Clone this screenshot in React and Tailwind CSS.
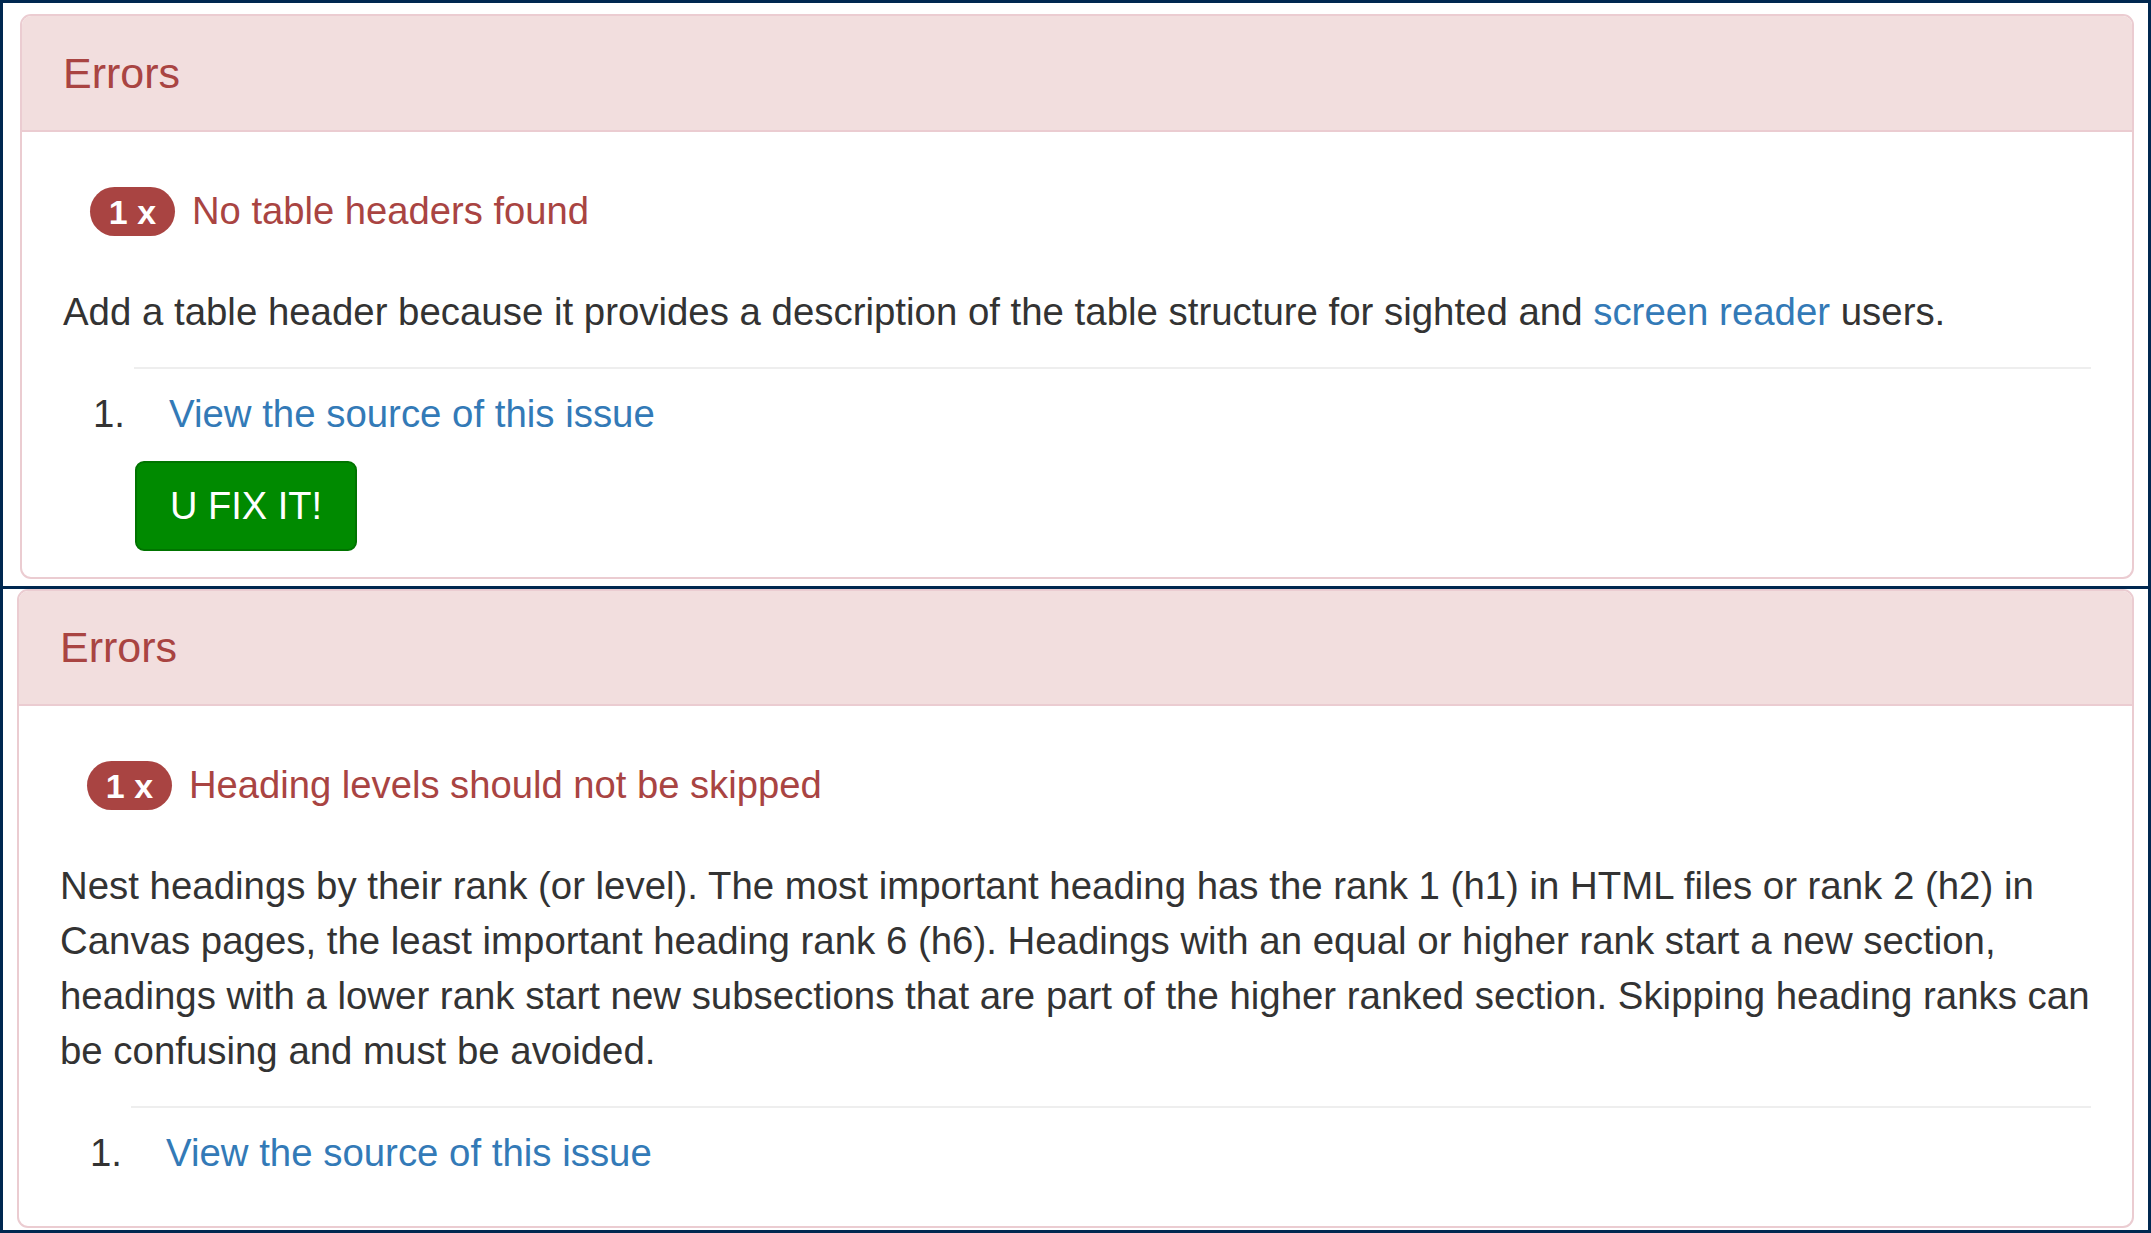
import React from 'react';

const font = { fontFamily: '"Liberation Sans", Arial, sans-serif' };

const Panel = ({ title, description, showButton, headerClass, bodyClass }) => {
  return (
    <div className="bg-white border-2 border-[#ebccd1] rounded-[11px] overflow-hidden">
      <div className={`flex items-center px-[41px] bg-[#f2dede] border-b-2 border-[#ebccd1] ${headerClass}`}>
        <h3 className="text-[43px] leading-none text-[#a94442] font-normal">Errors</h3>
      </div>
      <div className={`px-[41px] pt-[55px] ${bodyClass}`}>
        {/* Issue title */}
        <div className="flex items-center pl-[27px] h-[49px]">
          <span className="flex items-center justify-center w-[85px] h-[49px] rounded-full bg-[#a94442] text-white text-[34px] font-bold leading-none">
            1 x
          </span>
          <span className="ml-[17px] text-[38.2px] leading-none text-[#a94442] whitespace-nowrap">{title}</span>
        </div>

        <p className="mt-[48px] text-[38.4px] leading-[55px] text-[#333333]">{description}</p>

        <hr className="mt-[28px] ml-[71px] border-0 border-t-2 border-[#eeeeee]" />

        <ol className="mt-[17px] ml-[30px]">
          <li className="flex text-[38.4px] leading-[55px]">
            <span className="w-[76px] text-[#333333]">1.</span>
            <a href="#" className="text-[#337ab7]">View the source of this issue</a>
          </li>
        </ol>

        {showButton && (
          <button className="mt-[20px] ml-[72px] flex items-center justify-center w-[222px] h-[90px] rounded-[9px] bg-[#008a00] border-2 border-[#007400] text-white text-[38px] leading-none">
            U FIX IT!
          </button>
        )}
      </div>
    </div>
  );
};

const App = () => {
  return (
    <div style={font} className="w-[2151px] h-[1233px] bg-white border-[3px] border-[#002850] flex flex-col overflow-hidden">
      <div className="h-[583px] pt-[11px] pl-[17px] pr-[14px]">
        <Panel
          title="No table headers found"
          headerClass="h-[116px]"
          bodyClass="pb-[26px]"
          showButton
          description={
            <>
              Add a table header because it provides a description of the table structure for sighted and{' '}
              <a href="#" className="text-[#337ab7]">screen reader</a> users.
            </>
          }
        />
      </div>

      <div className="h-[3px] bg-[#002850]" />

      <div className="flex-1 pl-[14px] pr-[14px]">
        <Panel
          title="Heading levels should not be skipped"
          headerClass="h-[115px]"
          bodyClass="pb-[46px]"
          description="Nest headings by their rank (or level). The most important heading has the rank 1 (h1) in HTML files or rank 2 (h2) in Canvas pages, the least important heading rank 6 (h6). Headings with an equal or higher rank start a new section, headings with a lower rank start new subsections that are part of the higher ranked section. Skipping heading ranks can be confusing and must be avoided."
        />
      </div>
    </div>
  );
};

export default App;
